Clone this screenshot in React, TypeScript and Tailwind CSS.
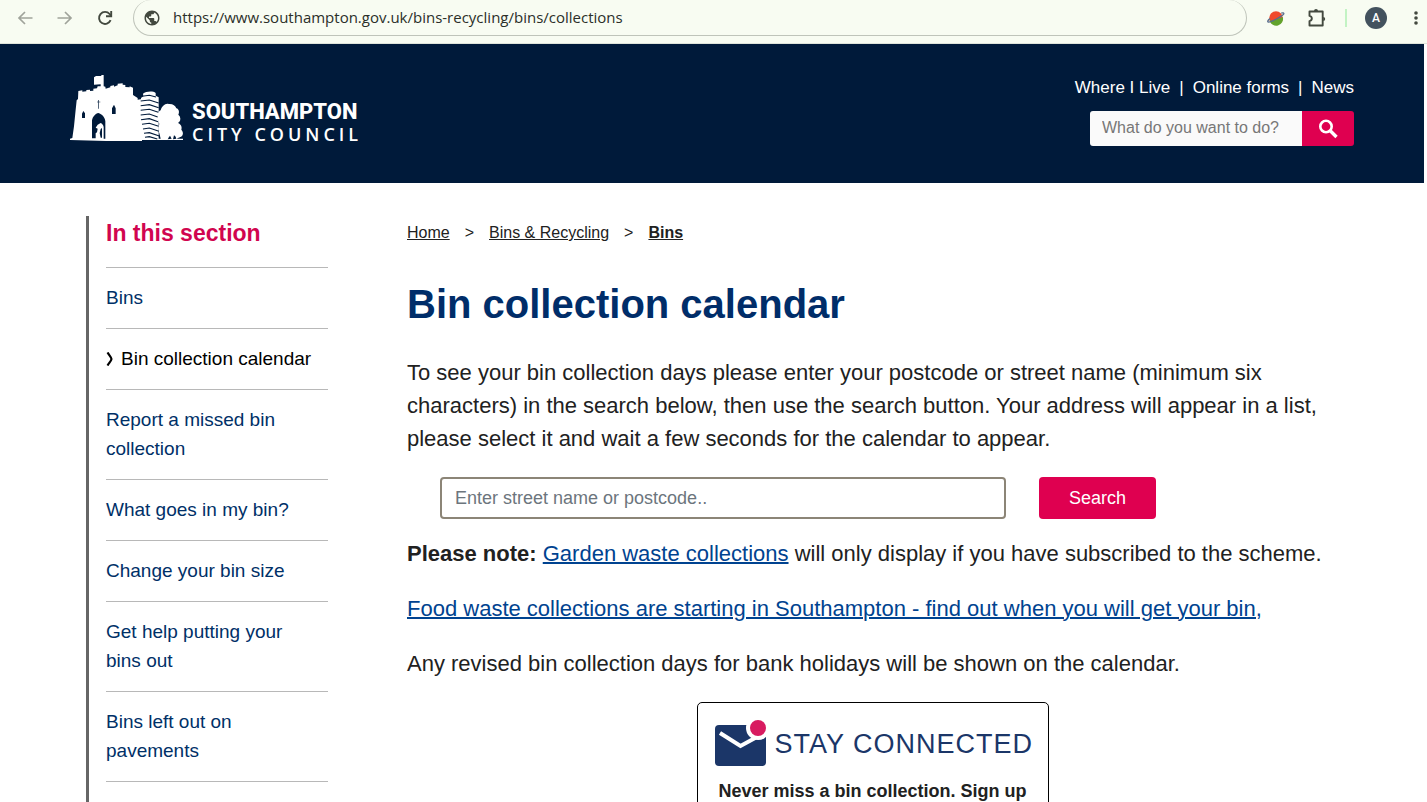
import { MdPublic } from "react-icons/md";

const sectionLinks = [
  { label: "Bins" },
  { label: "Bin collection calendar", current: true },
  { label: "Report a missed bin collection" },
  { label: "What goes in my bin?" },
  { label: "Change your bin size" },
  { label: "Get help putting your bins out" },
  { label: "Bins left out on pavements" },
];

const headerLinks = ["Where I Live", "Online forms", "News"];

function BrowserBar() {
  return (
    <div className="flex h-11 items-start border-b border-[#dfe4da] bg-[#f8fcf2] pr-1 pl-[17px] text-[#43493f]">
      <div className="flex h-[35px] items-center gap-6">
        <button aria-label="Back" className="text-[#a0a49b]">
          <svg viewBox="0 0 16 16" className="size-4" fill="none" stroke="currentColor" strokeWidth="1.7">
            <path d="M15.5 8H2.5M8 2 2 8l6 6" />
          </svg>
        </button>
        <button aria-label="Forward" className="text-[#a0a49b]">
          <svg viewBox="0 0 16 16" className="size-4" fill="none" stroke="currentColor" strokeWidth="1.7">
            <path d="M.5 8h13M8 2l6 6-6 6" />
          </svg>
        </button>
        <button aria-label="Reload">
          <svg viewBox="0 0 16 16" className="size-4" fill="none" stroke="currentColor" strokeWidth="1.9">
            <path d="M13.6 10.2A6 6 0 1 1 12.6 4L14 5.6" />
            <path d="M14.2 1v5.3H9" />
          </svg>
        </button>
      </div>

      <div className="ml-5 flex h-9 min-w-0 flex-1 items-center gap-3 rounded-[18px] border border-t-0 border-[#bfc4ba] px-[9px]">
        <MdPublic className="size-[18px] shrink-0" />
        <input
          aria-label="Address"
          defaultValue="https://www.southampton.gov.uk/bins-recycling/bins/collections"
          className="w-full bg-transparent font-['Open_Sans',sans-serif] text-[15px] text-[#2b2f29] outline-none"
        />
      </div>

      <div className="ml-5 flex h-[35px] items-center">
        <button aria-label="Extension">
          <svg viewBox="0 0 18 18" className="size-[18px]">
            <circle cx="9" cy="9" r="6.8" fill="#f04a2c" />
            <path d="M2.6 11.6a6.8 6.8 0 0 0 13.2-3.6C12 9.5 8 11.5 2.6 11.6Z" fill="#62a32c" />
            <path d="M3 9.5C.8 11.3.2 12.8 1.2 13.2 3.5 13.6 15.5 7 16.8 4.8c.3-.9-.8-1-2.6-.6" fill="none" stroke="#5a6d8c" strokeWidth="1.3" />
          </svg>
        </button>
        <button aria-label="Extensions" className="ml-[22px]">
          <svg viewBox="0 0 20 20" className="size-5" fill="none" stroke="currentColor" strokeWidth="1.9" strokeLinejoin="round">
            <path d="M2.5 3.5h13.2v14H2.5v-4.4c3.1-.7 3.1-4.5 0-5.2Z" />
            <path d="M7 3a2 2 0 0 1 4 0ZM16.2 9a2 2 0 0 1 0 4Z" fill="currentColor" stroke="none" />
          </svg>
        </button>
        <span className="ml-[18px] h-[18px] w-0.5 bg-[#c3f3c4]" />
        <button
          aria-label="Profile"
          className="ml-[18px] size-[22px] rounded-full bg-[#43525e] font-['Roboto',sans-serif] text-xs font-medium text-white"
        >
          A
        </button>
        <button aria-label="Menu" className="ml-[22px]">
          <svg viewBox="0 0 14 14" className="size-3.5" fill="currentColor">
            <circle cx="7" cy="2" r="1.8" />
            <circle cx="7" cy="7" r="1.8" />
            <circle cx="7" cy="12" r="1.8" />
          </svg>
        </button>
      </div>
    </div>
  );
}

function Logo() {
  return (
    <a href="#" aria-label="Southampton City Council" className="flex text-white">
      <svg viewBox="0 0 342 201" className="h-[67px] w-[114px]" fill="currentColor">
        {/* flag, towers and gatehouse */}
        <path d="M0 198v-4l7-2 5-35 5-50 3-28 4-4 1-24 12-2v4l12-1v-4l11-1v4l10-1v-6l11-1 2-6h9V31l-20 1V10l6-4h16V3h7v34l5 1 1 6 14-4v-4l11-2v4l11-4v-5l15-1v4l8 1v6l13 1v-3l10 4v22l14 9v5l13-2v129Z" />
        {/* trees and ground line */}
        <path d="M210 194h62l-4-16c-4-8-4-20 0-28l-5-16c-2-12 1-22 9-25 3-12 14-22 24-19 12-1 20 4 23 13 8 2 10 12 6 19 7 5 8 16 3 21l-4 4c9 4 13 12 10 20 7 7 6 17-1 21-5 3-9 2-12 6h18v4H210Z" />
        {/* tower block */}
        <path d="M219 59c8-7 30-9 38-2v8l9 5v126h-53V72l7-5Z" />
        <g fill="#001a3a">
          <path d="M66 193V139c2-12 11-20 19-22 11 3 20 13 21 25v52h-5v-35c-1-6-5-10-9-12l-9 5-6 9 6 3-2 11-4 3v15ZM36 132v-13l4-8 5 7v14ZM126 120v-17l6-11 5 11v17Z" />
          <path d="M85 78h2v5h4v2h-4v19h-2V85h-4v-2h4Z" />
          <path d="M92 165l4-3v29h-4l-3-14Z" />
          <path d="M293 196c2-4 5-9 7-11l5 9Zm16 0 3-12c3 1 5 4 7 10Z" />
        </g>
        <g fill="none" stroke="#001a3a" strokeWidth="3.2">
          <path d="M216 67l22-3 20 5M212 81l26-3 28 9M212 95l26-3 28 9M212 109l26-3 27 9M212 123l26-3 25 9M213 137l25-3 26 9M216 151l22-3 28 9M219 165l19-3 29 10M222 178l16-2 30 10M225 190l13-2 24 7" />
        </g>
      </svg>
      <span className="flex flex-col pt-[26px] pl-2">
        <span className="font-['Roboto',sans-serif] text-[22px] leading-6 font-extrabold">SOUTHAMPTON</span>
        <span className="font-['Open_Sans',sans-serif] text-lg leading-5 font-semibold tracking-[4px]">CITY COUNCIL</span>
      </span>
    </a>
  );
}

function Header() {
  return (
    <header className="flex h-[139px] justify-between bg-[#001a3a] px-[70px]">
      <div className="pt-[30px]">
        <Logo />
      </div>
      <div className="flex flex-col items-end pt-8">
        <nav aria-label="Quick links">
          <ul className="flex text-[17px] leading-6 text-white">
            {headerLinks.map((link, i) => (
              <li key={link}>
                {i > 0 && <span className="mx-[9px]">|</span>}
                <a href="#">{link}</a>
              </li>
            ))}
          </ul>
        </nav>
        <form role="search" className="mt-[11px] flex h-[35px] w-[264px] overflow-hidden rounded-[3px]">
          <input
            type="text"
            aria-label="Search the site"
            placeholder="What do you want to do?"
            className="min-w-0 flex-1 bg-[#fafafa] pr-1 pb-0.5 pl-3 text-base placeholder:text-[#777777]"
          />
          <button type="button" aria-label="Search" className="flex w-[52px] items-center justify-center bg-[#df0050] text-white">
            <svg viewBox="0 0 20 20" className="size-5" fill="none" stroke="currentColor">
              <circle cx="8" cy="7.5" r="5.7" strokeWidth="2.6" />
              <path d="m12 11.5 6.5 6.5" strokeWidth="3.4" />
            </svg>
          </button>
        </form>
      </div>
    </header>
  );
}

function Sidebar() {
  return (
    <aside className="w-1/4 shrink-0 pr-[63px] pl-4">
      <div className="h-full border-l-[3px] border-[#666666] pl-[17px]">
        <h2 className="h-[51px] text-[23px] leading-[34px] font-bold text-[#d1054f]">In this section</h2>
        <ul>
          {sectionLinks.map(({ label, current }) => (
            <li key={label} className="border-t border-[#b8b8b8] pt-[15px] pb-4 text-[19px] leading-[29px]">
              <a
                href="#"
                aria-current={current ? "page" : undefined}
                className={current ? "flex items-center gap-[7px] whitespace-nowrap text-black" : "block pr-3 text-[#003067]"}
              >
                {current && (
                  <svg viewBox="0 0 8 14" className="h-3.5 w-2" fill="none" stroke="currentColor" strokeWidth="2.2">
                    <path d="M1.5.5C3.500 3.500 5.500 5.500 5.500 7S3.500 10.500 1.500 13.500" />
                  </svg>
                )}
                {label}
              </a>
            </li>
          ))}
          <li className="border-t border-[#b8b8b8] py-4" />
        </ul>
      </div>
    </aside>
  );
}

function StayConnected() {
  return (
    <section className="mx-auto mt-[22px] w-[352px] rounded-[5px] border border-black px-4 pt-4 pb-6 text-center">
      <div className="flex items-center gap-2 text-[#1b3668]">
        <svg viewBox="0 0 53 48" className="h-12 w-[53px] shrink-0">
          <rect x="1" y="6" width="51" height="41" rx="4" fill="currentColor" />
          <path d="m6 14 20.5 13L42 18.5" fill="none" stroke="white" strokeWidth="4" />
          <circle cx="44" cy="9" r="12" fill="white" />
          <circle cx="44" cy="9" r="8" fill="#d81b60" />
        </svg>
        <span className="pt-0.5 text-[27px] leading-10 tracking-[1px] whitespace-nowrap">STAY CONNECTED</span>
      </div>
      <p className="mt-2.5 text-lg leading-7 font-bold">Never miss a bin collection. Sign up</p>
    </section>
  );
}

function Main() {
  return (
    <main className="min-w-0 flex-1 px-4 text-[22px] leading-[33px] text-[#212121]">
      <nav aria-label="Breadcrumb">
        <ol className="flex text-base leading-[33px]">
          <li>
            <a href="#" className="underline">Home</a>
            <span className="mx-[15px]">&gt;</span>
          </li>
          <li>
            <a href="#" className="underline">Bins &amp; Recycling</a>
            <span className="mx-[15px]">&gt;</span>
          </li>
          <li>
            <a href="#" aria-current="page" className="font-bold underline">Bins</a>
          </li>
        </ol>
      </nav>

      <h1 className="mt-[31px] text-[40px] leading-[48px] font-bold text-[#002d69]">Bin collection calendar</h1>

      <p className="mt-7">
        To see your bin collection days please enter your postcode or street name (minimum six characters) in the
        search below, then use the search button. Your address will appear in a list, please select it and wait a few
        seconds for the calendar to appear.
      </p>

      <form className="mt-[22px] flex pl-[33px]">
        <input
          type="text"
          aria-label="Street name or postcode"
          placeholder="Enter street name or postcode.."
          className="h-[42px] w-[566px] rounded border-2 border-[#8c8577] px-[13px] text-lg placeholder:text-[#6c757d]"
        />
        <button type="button" className="ml-[33px] h-[42px] w-[117px] rounded bg-[#df0050] text-lg text-white">
          Search
        </button>
      </form>

      <p className="mt-[18px]">
        <strong>Please note:</strong>{" "}
        <a href="#" className="text-[#004390] underline decoration-2">Garden waste collections</a> will only display if you
        have subscribed to the scheme.
      </p>
      <p className="mt-[22px]">
        <a href="#" className="text-[#004390] underline decoration-2">
          Food waste collections are starting in Southampton - find out when you will get your bin,
        </a>
      </p>
      <p className="mt-[22px]">Any revised bin collection days for bank holidays will be shown on the calendar.</p>

      <StayConnected />
    </main>
  );
}

export default function App() {
  return (
    <div className="h-screen overflow-hidden bg-white font-['Liberation_Sans',Arial,sans-serif]">
      <BrowserBar />
      <div className="pr-[3px]">
        <Header />
        <div className="flex px-[70px] pt-[33px]">
          <Sidebar />
          <Main />
        </div>
      </div>
    </div>
  );
}
